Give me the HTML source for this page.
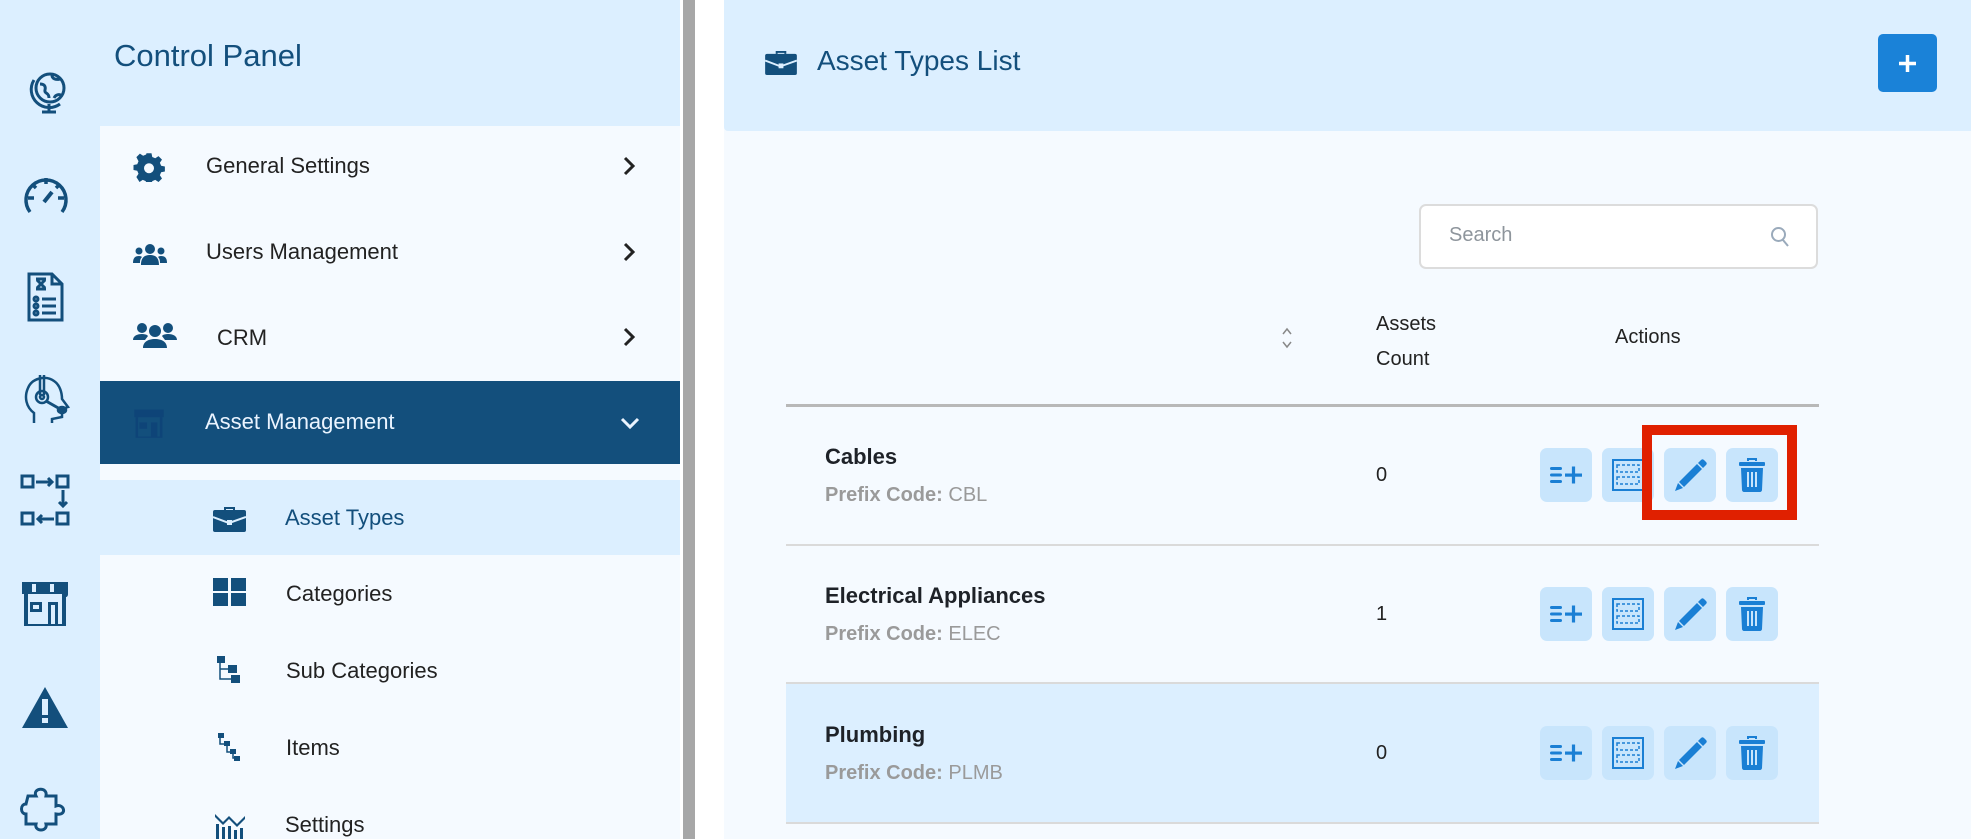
<!DOCTYPE html>
<html><head><meta charset="utf-8"><style>
*{margin:0;padding:0;box-sizing:border-box}
body{width:1971px;height:839px;overflow:hidden;background:#fff;font-family:"Liberation Sans",sans-serif;position:relative}
.abs{position:absolute}
#rail{left:0;top:0;width:100px;height:839px;background:#dcefff}
#side{left:100px;top:0;width:580px;height:839px;background:#f5faff}
#sidehead{left:100px;top:0;width:580px;height:126px;background:#dcefff}
#scroll{left:683px;top:0;width:12px;height:839px;background:#a7a7a7}
#main{left:724px;top:0;width:1247px;height:839px;background:#f5faff}
#mainhead{left:724px;top:0;width:1247px;height:131px;background:#dcefff;border-bottom-left-radius:4px}
.menu{font-size:22px;color:#222}
.th{font-size:20px;color:#222}
.name{font-size:22px;font-weight:bold;color:#1e2228}
.pref{font-size:20px;color:#9a9a9a}
.btn{position:absolute;width:52px;height:54px;background:#c8e5fc;border-radius:7px;display:flex;align-items:center;justify-content:center}
</style></head><body>
<div id="rail" class="abs"></div>
<div id="side" class="abs"></div>
<div id="sidehead" class="abs"></div>
<div id="scroll" class="abs"></div>
<div id="main" class="abs"></div>
<div id="mainhead" class="abs"></div>

<svg class="abs" style="left:24px;top:68px" width="50" height="50" viewBox="0 0 50 50" fill="none" stroke="#134f7c" stroke-width="3"><circle cx="26" cy="20" r="14"/><path d="M10 12a18 18 0 0 0 26 24M25 36v8M18 44h14M16 16c4 0 6 2 5 6s4 2 4 8M28 7c0 4 4 5 8 4M30 30c2-4 6-4 8-2"/></svg>
<svg class="abs" style="left:20px;top:172px" width="52" height="44" viewBox="0 0 52 44" fill="none" stroke="#134f7c" stroke-width="3.5"><path d="M10 40A20 20 0 1 1 42 40"/><path d="M26 6v6M8 26h6M38 26h6M12 12l4 4M40 12l-4 4"/><path d="M24 30l8-10" stroke-width="4"/></svg>
<svg class="abs" style="left:26px;top:271px" width="40" height="52" viewBox="0 0 40 52" fill="none" stroke="#134f7c" stroke-width="3"><path d="M3 3h23l10 10v36H3z"/><path d="M26 3v10h10M10 8h10M10 18h10M11 9l8 8M19 9l-8 8M16 28h14M16 35h14M16 42h14"/><circle cx="10" cy="28" r="2"/><circle cx="10" cy="35" r="2"/><circle cx="10" cy="42" r="2"/></svg>
<svg class="abs" style="left:22px;top:373px" width="50" height="55" viewBox="0 0 50 55" fill="none" stroke="#134f7c" stroke-width="2.5"><path d="M12 50V40C4 34 2 24 6 15 10 5 24 2 32 8c6 4 8 12 8 18l6 8-6 2v8l-10 2v4"/><path d="M18 2v20M22 2v20"/><circle cx="20" cy="24" r="6"/><circle cx="20" cy="24" r="2"/><path d="M24 28l14 8" stroke-width="3"/><ellipse cx="40" cy="37" rx="4" ry="3" fill="#134f7c"/></svg>
<svg class="abs" style="left:20px;top:474px" width="52" height="54" viewBox="0 0 52 54" fill="none" stroke="#134f7c" stroke-width="3"><rect x="2" y="2" width="11" height="11"/><rect x="37" y="2" width="11" height="11"/><rect x="2" y="39" width="11" height="11"/><rect x="37" y="39" width="11" height="11"/><path d="M16 8h16M28 4l4 4-4 4M43 16v16M39 28l4 4 4-4M34 45H18M22 41l-4 4 4 4"/></svg>
<svg class="abs" style="left:20px;top:580px" width="50" height="46" viewBox="0 0 50 46" fill="#134f7c"><path d="M2 2h46v12c0 4-4 4-5 0H2z"/><path d="M4 14h4v30h34V14h4v32H4z"/><rect x="12" y="4" width="4" height="8" fill="#dcefff"/><rect x="30" y="4" width="4" height="8" fill="#dcefff"/><path d="M10 22h12v10H10zM13 25v4h6v-4z M28 22h10v22h-3V25h-4v19h-3z"/></svg>
<svg class="abs" style="left:20px;top:685px" width="50" height="45" viewBox="0 0 50 45"><path d="M25 2L48 43H2z" fill="#134f7c"/><rect x="22" y="14" width="6" height="16" fill="#dcefff"/><rect x="22" y="33" width="6" height="5" fill="#dcefff"/></svg>
<svg class="abs" style="left:20px;top:782px" width="50" height="50" viewBox="0 0 50 50" fill="none" stroke="#134f7c" stroke-width="3"><path d="M8 14h8c-4-8 12-10 10 0h10v10c8-3 12 10 0 8v10H26c2 8-12 8-10 0H6V32c-6 0-6-10 0-10z"/></svg>

<div class="abs" style="left:114px;top:38px;font-size:31px;color:#134f7c">Control Panel</div>

<svg class="abs" style="left:133px;top:152px" width="32" height="30" viewBox="0 0 24 24" fill="#134f7c"><path d="M10 1h4l.6 3 2.4 1 2.6-1.7 2.8 2.8L20.7 8.6l1 2.4 3 .6v4l-3 .6-1 2.4 1.7 2.6-2.8 2.8-2.6-1.7-2.4 1-.6 3h-4l-.6-3-2.4-1-2.6 1.7L1.9 20l1.7-2.6-1-2.4-3-.6v-4l3-.6 1-2.4L1.9 4.1 4.7 1.3 7.3 3l2.4-1z"/><circle cx="12" cy="13" r="4" fill="#f5faff"/></svg>
<div class="abs menu" style="left:206px;top:153px">General Settings</div>
<svg class="abs" style="left:622px;top:156px" width="14" height="20" viewBox="0 0 14 20" fill="none" stroke="#222" stroke-width="3"><path d="M3 2l8 8-8 8"/></svg>
<svg class="abs" style="left:133px;top:243px" width="34" height="22" viewBox="0 0 34 22" fill="#134f7c"><circle cx="17" cy="6" r="5"/><circle cx="6" cy="8" r="3.5"/><circle cx="28" cy="8" r="3.5"/><path d="M8 22c0-8 4-10 9-10s9 2 9 10zM0 20c0-5 2-7 6-7 2 0 3 1 3 1-2 2-2 4-2 6zM34 20c0-5-2-7-6-7-2 0-3 1-3 1 2 2 2 4 2 6z"/></svg>
<div class="abs menu" style="left:206px;top:239px">Users Management</div>
<svg class="abs" style="left:622px;top:242px" width="14" height="20" viewBox="0 0 14 20" fill="none" stroke="#222" stroke-width="3"><path d="M3 2l8 8-8 8"/></svg>
<svg class="abs" style="left:133px;top:322px" width="44" height="26" viewBox="0 0 44 26" fill="#134f7c"><circle cx="9" cy="6" r="5"/><circle cx="35" cy="6" r="5"/><circle cx="22" cy="9" r="6"/><path d="M0 18c0-4 4-6 9-6s6 2 6 2l-3 4zM44 18c0-4-4-6-9-6s-6 2-6 2l3 4zM10 26c0-6 5-9 12-9s12 3 12 9z"/></svg>
<div class="abs menu" style="left:217px;top:325px">CRM</div>
<svg class="abs" style="left:622px;top:327px" width="14" height="20" viewBox="0 0 14 20" fill="none" stroke="#222" stroke-width="3"><path d="M3 2l8 8-8 8"/></svg>

<div class="abs" style="left:100px;top:381px;width:580px;height:83px;background:#134f7c"></div>
<svg class="abs" style="left:133px;top:408px" width="32" height="30" viewBox="0 0 50 46" fill="#0e4478"><path d="M2 2h46v12H2z"/><path d="M4 14h4v30h34V14h4v32H4z"/><path d="M10 22h12v10H10zM28 22h10v22H28z"/></svg>
<div class="abs" style="left:205px;top:409px;font-size:22px;color:#eaf4ff">Asset Management</div>
<svg class="abs" style="left:620px;top:416px" width="20" height="14" viewBox="0 0 20 14" fill="none" stroke="#eaf4ff" stroke-width="3"><path d="M2 3l8 8 8-8"/></svg>

<div class="abs" style="left:100px;top:480px;width:580px;height:75px;background:#dcefff"></div>
<svg class="abs" style="left:213px;top:506px" width="33" height="26" viewBox="0 0 33 26" fill="#134f7c"><path d="M11 4V1h11v3h-2V3h-7v1z"/><rect x="0" y="4" width="33" height="22" rx="2"/><path d="M0 11l16 6 17-6" stroke="#dcefff" stroke-width="2" fill="none"/><rect x="14" y="14" width="5" height="5" fill="#dcefff"/></svg>
<div class="abs" style="left:285px;top:505px;font-size:22px;color:#134f7c">Asset Types</div>

<svg class="abs" style="left:213px;top:578px" width="33" height="28" viewBox="0 0 33 28" fill="#134f7c"><rect x="0" y="0" width="15" height="13"/><rect x="18" y="0" width="15" height="13"/><rect x="0" y="15" width="15" height="13"/><rect x="18" y="15" width="15" height="13"/></svg>
<div class="abs menu" style="left:286px;top:581px">Categories</div>
<svg class="abs" style="left:217px;top:656px" width="25" height="28" viewBox="0 0 25 28" fill="#134f7c"><rect x="0" y="0" width="8" height="7"/><rect x="11" y="9" width="9" height="8"/><rect x="14" y="19" width="9" height="8"/><path d="M3 7v16h11M3 13h8" stroke="#134f7c" stroke-width="1.5" fill="none"/></svg>
<div class="abs menu" style="left:286px;top:658px">Sub Categories</div>
<svg class="abs" style="left:218px;top:733px" width="24" height="29" viewBox="0 0 24 29" fill="#134f7c"><rect x="0" y="0" width="6" height="5"/><rect x="6" y="8" width="6" height="5"/><rect x="12" y="16" width="6" height="5"/><rect x="16" y="23" width="6" height="5"/><path d="M2 5v6h4M9 13v6h3M15 21v4h1" stroke="#134f7c" stroke-width="1.5" fill="none"/></svg>
<div class="abs menu" style="left:286px;top:735px">Items</div>
<svg class="abs" style="left:215px;top:810px" width="32" height="29" viewBox="0 0 32 29" fill="#134f7c"><path d="M0 4l8 8 6-6 8 8 8-8v3l-8 8-8-8-6 6L0 7z"/><rect x="1" y="14" width="3" height="15"/><rect x="7" y="17" width="3" height="12"/><rect x="13" y="16" width="3" height="13"/><rect x="19" y="20" width="3" height="9"/><rect x="25" y="18" width="3" height="11"/></svg>
<div class="abs menu" style="left:285px;top:812px">Settings</div>

<svg class="abs" style="left:765px;top:50px" width="32" height="25" viewBox="0 0 33 26" fill="#134f7c"><path d="M11 4V1h11v3h-2V3h-7v1z"/><rect x="0" y="4" width="33" height="22" rx="2"/><path d="M0 11l16 6 17-6" stroke="#dcefff" stroke-width="2" fill="none"/><rect x="14" y="14" width="5" height="5" fill="#dcefff"/></svg>
<div class="abs" style="left:817px;top:45px;font-size:28px;color:#134f7c">Asset Types List</div>
<div class="abs" style="left:1878px;top:34px;width:59px;height:58px;background:#1a82d8;border-radius:5px"></div>
<svg class="abs" style="left:1897px;top:53px" width="21" height="21" viewBox="0 0 21 21"><path d="M10.5 2v17M2 10.5h17" stroke="#fff" stroke-width="3.5"/></svg>

<div class="abs" style="left:1419px;top:204px;width:399px;height:65px;background:#fff;border:2px solid #dcdcdc;border-radius:7px"></div>
<div class="abs" style="left:1449px;top:224px;font-size:20px;color:#8e959c">Search</div>
<svg class="abs" style="left:1770px;top:226px" width="20" height="22" viewBox="0 0 20 22" fill="none" stroke="#9aaabb" stroke-width="2"><circle cx="8.5" cy="8.5" r="6.5"/><path d="M13 14l5 6"/></svg>

<svg class="abs" style="left:1280px;top:326px" width="14" height="24" viewBox="0 0 14 24" fill="none" stroke="#888" stroke-width="1.5"><path d="M3 8l4-5 4 5M3 16l4 5 4-5"/></svg>
<div class="abs th" style="left:1376px;top:307px;line-height:35px">Assets<br>Count</div>
<div class="abs th" style="left:1615px;top:326px">Actions</div>
<div class="abs" style="left:786px;top:404px;width:1033px;height:3px;background:#b8b8b8"></div>

<div class="abs" style="left:786px;top:544px;width:1033px;height:2px;background:#dadada"></div>
<div class="abs" style="left:786px;top:684px;width:1033px;height:138px;background:#dcefff"></div>
<div class="abs" style="left:786px;top:682px;width:1033px;height:2px;background:#dadada"></div>
<div class="abs" style="left:786px;top:822px;width:1033px;height:2px;background:#dadada"></div>

<div class="abs name" style="left:825px;top:444px">Cables</div>
<div class="abs pref" style="left:825px;top:484px"><b>Prefix Code:</b> CBL</div>
<div class="abs th" style="left:1376px;top:464px">0</div>
<div class="abs name" style="left:825px;top:583px">Electrical Appliances</div>
<div class="abs pref" style="left:825px;top:623px"><b>Prefix Code:</b> ELEC</div>
<div class="abs th" style="left:1376px;top:603px">1</div>
<div class="abs name" style="left:825px;top:722px">Plumbing</div>
<div class="abs pref" style="left:825px;top:762px"><b>Prefix Code:</b> PLMB</div>
<div class="abs th" style="left:1376px;top:742px">0</div>

<!-- Row 1 buttons -->
<div class="btn" style="left:1540px;top:448px"><svg width="32" height="18" viewBox="0 0 32 18" fill="#1a7fd4"><rect x="0" y="1" width="12" height="3" rx="1.5"/><rect x="0" y="7.5" width="12" height="3" rx="1.5"/><rect x="0" y="14" width="12" height="3" rx="1.5"/><rect x="15" y="7.5" width="17" height="3.2"/><rect x="21.9" y="0.5" width="3.2" height="17"/></svg></div>
<div class="btn" style="left:1602px;top:448px"><svg width="32" height="32" viewBox="0 0 32 32" fill="none" stroke="#1a7fd4"><rect x="1" y="1" width="30" height="30" stroke-width="2"/><rect x="5" y="6" width="22" height="7" stroke-dasharray="3 2" stroke-width="1.5"/><rect x="5" y="18" width="22" height="7" stroke-dasharray="3 2" stroke-width="1.5"/></svg></div>
<div class="btn" style="left:1664px;top:448px"><svg width="34" height="34" viewBox="0 0 34 34" fill="#1a7fd4"><path d="M6 24L24 6l5 5-18 18z"/><path d="M25 5l3-3c1-1 2-1 3 0l2 2c1 1 1 2 0 3l-3 3z"/><path d="M5 25l5 5-8 3z"/></svg></div>
<div class="btn" style="left:1726px;top:448px"><svg width="26" height="34" viewBox="0 0 26 34" fill="#1a7fd4"><path d="M9 3V1h8v2" stroke="#1a7fd4" stroke-width="2" fill="none"/><rect x="0" y="4" width="26" height="4" rx="1"/><path d="M2 10h22l-1 22c0 1-1 2-2 2H5c-1 0-2-1-2-2z"/><rect x="8" y="14" width="2" height="15" fill="#c8e5fc"/><rect x="12" y="14" width="2" height="15" fill="#c8e5fc"/><rect x="16" y="14" width="2" height="15" fill="#c8e5fc"/></svg></div>
<!-- Row 2 -->
<div class="btn" style="left:1540px;top:587px"><svg width="32" height="18" viewBox="0 0 32 18" fill="#1a7fd4"><rect x="0" y="1" width="12" height="3" rx="1.5"/><rect x="0" y="7.5" width="12" height="3" rx="1.5"/><rect x="0" y="14" width="12" height="3" rx="1.5"/><rect x="15" y="7.5" width="17" height="3.2"/><rect x="21.9" y="0.5" width="3.2" height="17"/></svg></div>
<div class="btn" style="left:1602px;top:587px"><svg width="32" height="32" viewBox="0 0 32 32" fill="none" stroke="#1a7fd4"><rect x="1" y="1" width="30" height="30" stroke-width="2"/><rect x="5" y="6" width="22" height="7" stroke-dasharray="3 2" stroke-width="1.5"/><rect x="5" y="18" width="22" height="7" stroke-dasharray="3 2" stroke-width="1.5"/></svg></div>
<div class="btn" style="left:1664px;top:587px"><svg width="34" height="34" viewBox="0 0 34 34" fill="#1a7fd4"><path d="M6 24L24 6l5 5-18 18z"/><path d="M25 5l3-3c1-1 2-1 3 0l2 2c1 1 1 2 0 3l-3 3z"/><path d="M5 25l5 5-8 3z"/></svg></div>
<div class="btn" style="left:1726px;top:587px"><svg width="26" height="34" viewBox="0 0 26 34" fill="#1a7fd4"><path d="M9 3V1h8v2" stroke="#1a7fd4" stroke-width="2" fill="none"/><rect x="0" y="4" width="26" height="4" rx="1"/><path d="M2 10h22l-1 22c0 1-1 2-2 2H5c-1 0-2-1-2-2z"/><rect x="8" y="14" width="2" height="15" fill="#c8e5fc"/><rect x="12" y="14" width="2" height="15" fill="#c8e5fc"/><rect x="16" y="14" width="2" height="15" fill="#c8e5fc"/></svg></div>
<!-- Row 3 -->
<div class="btn" style="left:1540px;top:726px"><svg width="32" height="18" viewBox="0 0 32 18" fill="#1a7fd4"><rect x="0" y="1" width="12" height="3" rx="1.5"/><rect x="0" y="7.5" width="12" height="3" rx="1.5"/><rect x="0" y="14" width="12" height="3" rx="1.5"/><rect x="15" y="7.5" width="17" height="3.2"/><rect x="21.9" y="0.5" width="3.2" height="17"/></svg></div>
<div class="btn" style="left:1602px;top:726px"><svg width="32" height="32" viewBox="0 0 32 32" fill="none" stroke="#1a7fd4"><rect x="1" y="1" width="30" height="30" stroke-width="2"/><rect x="5" y="6" width="22" height="7" stroke-dasharray="3 2" stroke-width="1.5"/><rect x="5" y="18" width="22" height="7" stroke-dasharray="3 2" stroke-width="1.5"/></svg></div>
<div class="btn" style="left:1664px;top:726px"><svg width="34" height="34" viewBox="0 0 34 34" fill="#1a7fd4"><path d="M6 24L24 6l5 5-18 18z"/><path d="M25 5l3-3c1-1 2-1 3 0l2 2c1 1 1 2 0 3l-3 3z"/><path d="M5 25l5 5-8 3z"/></svg></div>
<div class="btn" style="left:1726px;top:726px"><svg width="26" height="34" viewBox="0 0 26 34" fill="#1a7fd4"><path d="M9 3V1h8v2" stroke="#1a7fd4" stroke-width="2" fill="none"/><rect x="0" y="4" width="26" height="4" rx="1"/><path d="M2 10h22l-1 22c0 1-1 2-2 2H5c-1 0-2-1-2-2z"/><rect x="8" y="14" width="2" height="15" fill="#c8e5fc"/><rect x="12" y="14" width="2" height="15" fill="#c8e5fc"/><rect x="16" y="14" width="2" height="15" fill="#c8e5fc"/></svg></div>

<!-- red highlight -->
<div class="abs" style="left:1642px;top:425px;width:155px;height:95px;border:10px solid #e02000"></div>
</body></html>
